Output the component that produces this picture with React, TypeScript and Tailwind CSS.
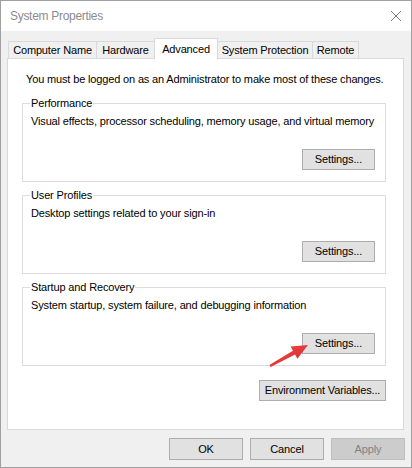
import React from "react";

function Btn({
  children,
  className = "",
  disabled = false,
}: {
  children: React.ReactNode;
  className?: string;
  disabled?: boolean;
}) {
  return (
    <div
      className={
        "flex items-center justify-center border box-border whitespace-nowrap " +
        (disabled
          ? "border-[#bfbfbf] bg-[#cccccc] text-[#838383] "
          : "border-[#adadad] bg-[#e1e1e1] text-black ") +
        className
      }
    >
      {children}
    </div>
  );
}

function Group({ title, desc }: { title: string; desc: string }) {
  return (
    <fieldset className="box-border h-[86px] w-[364px] border border-[#dcdcdc] pl-[7px] pr-[10px]">
      <legend className="px-[1px] leading-[15px] text-black">{title}</legend>
      <div className="mt-[3px] whitespace-nowrap pl-[1px] leading-[15px] text-black">{desc}</div>
      <div className="mt-[20px] flex justify-end">
        <Btn className="h-[21px] w-[73px]">Settings...</Btn>
      </div>
    </fieldset>
  );
}

function Tab({
  label,
  w,
  selected = false,
  first = false,
}: {
  label: string;
  w: string;
  selected?: boolean;
  first?: boolean;
}) {
  return (
    <div
      className={
        "box-border flex justify-center whitespace-nowrap border-l border-r border-t border-[#d9d9d9] " +
        (first ? "" : "-ml-px ") +
        (selected
          ? "relative z-10 -mb-px h-[21px] items-start bg-white pt-[3px] "
          : "h-[17px] items-start bg-[#f0f0f0] pt-[1px] ") +
        w
      }
    >
      <span className="leading-[15px] text-black">{label}</span>
    </div>
  );
}

export default function App() {
  return (
    <div className="relative box-border flex h-[468px] w-[412px] flex-col border border-[#a0a0a0] bg-[#f0f0f0] text-[11px] tracking-[-0.15px] font-['Liberation_Sans',Arial,sans-serif]">
      {/* Title bar */}
      <div className="flex h-[30px] items-center justify-between bg-white pl-[9px] pr-[8px]">
        <span className="text-[12px] tracking-[-0.3px] text-[#8c8c8c]">System Properties</span>
        <svg width="12" height="12" viewBox="0 0 12 12" className="mr-[1px]">
          <path d="M1 1 L11 11 M11 1 L1 11" stroke="#7a7a7a" strokeWidth="1" fill="none" />
        </svg>
      </div>

      {/* Tabs */}
      <div className="mt-[7px] ml-[7px] flex h-[20px] items-end">
        <Tab label="Computer Name" w="w-[89px]" first />
        <Tab label="Hardware" w="w-[59px]" />
        <Tab label="Advanced" w="w-[64px]" selected />
        <Tab label="System Protection" w="w-[96px]" />
        <Tab label="Remote" w="w-[47px]" />
      </div>

      {/* Panel */}
      <div className="ml-[6px] box-border flex h-[372px] w-[397px] flex-col border border-[#d9d9d9] bg-white pt-[13px]">
        <div className="whitespace-nowrap pl-[18px] leading-[15px] text-black">
          You must be logged on as an Administrator to make most of these changes.
        </div>
        <div className="ml-[14px] mt-[9px] flex flex-col gap-[6px]">
          <Group
            title="Performance"
            desc="Visual effects, processor scheduling, memory usage, and virtual memory"
          />
          <Group title="User Profiles" desc="Desktop settings related to your sign-in" />
          <Group
            title="Startup and Recovery"
            desc="System startup, system failure, and debugging information"
          />
        </div>
        <div className="ml-[14px] mt-[14px] flex w-[364px] justify-end">
          <Btn className="h-[21px] w-[127px]">Environment Variables...</Btn>
        </div>
      </div>

      {/* Bottom buttons */}
      <div className="mt-[8px] flex justify-end gap-[7px] pr-[6px]">
        <Btn className="h-[22px] w-[74px]">OK</Btn>
        <Btn className="h-[22px] w-[74px]">Cancel</Btn>
        <Btn className="h-[22px] w-[74px]" disabled>
          Apply
        </Btn>
      </div>

      {/* Red arrow overlay */}
      <svg
        className="pointer-events-none absolute left-[-1px] top-[-1px]"
        width="412"
        height="468"
        viewBox="0 0 412 468"
      >
        <defs>
          <linearGradient id="ar" x1="0" y1="0" x2="1" y2="1">
            <stop offset="0" stopColor="#f04848" />
            <stop offset="1" stopColor="#d42a2a" />
          </linearGradient>
        </defs>
        <polygon
          points="308,345 297.4,358.8 295.1,354.6 270.6,367 269.4,365 292.9,350.8 290.6,346.6"
          fill="url(#ar)"
        />
      </svg>
    </div>
  );
}
